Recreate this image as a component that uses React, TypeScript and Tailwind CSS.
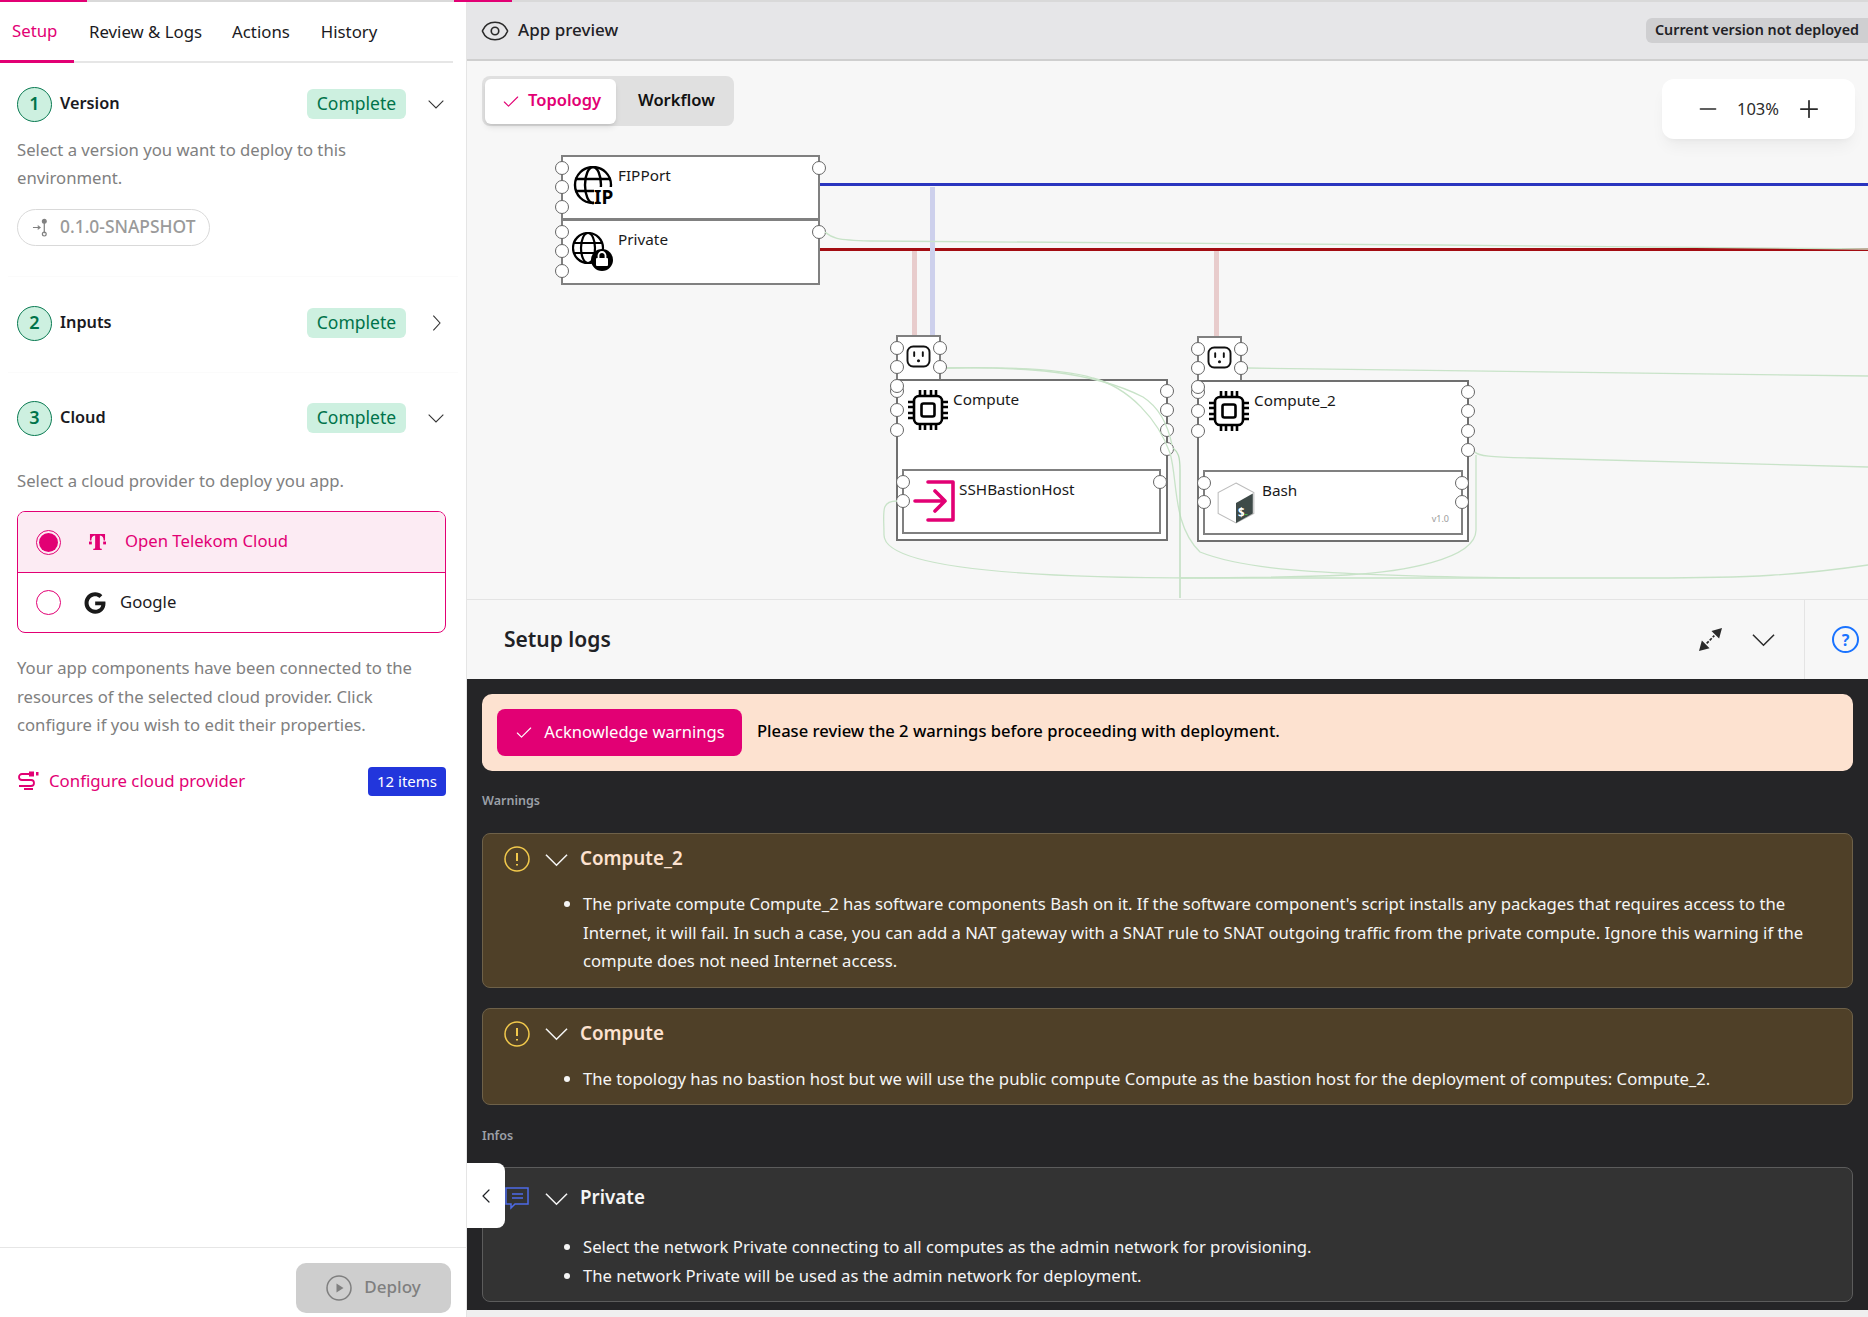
import React from 'react';
import { FaGoogle } from 'react-icons/fa';
import { Check, Eye, Minus, Plus, ChevronLeft } from 'lucide-react';

const Chevron: React.FC<{ right?: boolean; className?: string }> = ({ right, className }) => (
  <svg viewBox="0 0 24 24" className={className} fill="none" stroke="currentColor" strokeWidth="1.6">
    {right ? <path d="M8 1 L18 12 L8 23" /> : <path d="M1 7 L12 18 L23 7" />}
  </svg>
);

const Port: React.FC = () => <div className="w-[14px] h-[14px] rounded-full border-[1.5px] border-[#666] bg-white" />;

const PortColumn: React.FC<{ count: number; className: string }> = ({ count, className }) => (
  <div className={`absolute flex flex-col gap-[5.4px] ${className}`}>
    {Array.from({ length: count }).map((_, i) => (
      <Port key={i} />
    ))}
  </div>
);

const ChipIcon: React.FC<{ className: string }> = ({ className }) => (
  <svg viewBox="0 0 42 42" className={className} fill="none" stroke="#000" strokeWidth="2.6">
    <rect x="7" y="7" width="28" height="28" rx="5" />
    <rect x="14.5" y="14.5" width="13" height="13" rx="2" />
    <path d="M13 1v6M18 1v6M24 1v6M29 1v6M13 35v6M18 35v6M24 35v6M29 35v6M1 13h6M1 18h6M1 24h6M1 29h6M35 13h6M35 18h6M35 24h6M35 29h6" />
  </svg>
);

const SocketIcon: React.FC<{ className: string }> = ({ className }) => (
  <svg viewBox="0 0 26 24" className={className} fill="none" stroke="#111" strokeWidth="2">
    <rect x="1.5" y="1.5" width="23" height="21" rx="6" />
    <path d="M8.5 7.5v4M17.5 7.5v4" strokeLinecap="round" />
    <circle cx="13" cy="16.5" r="1.6" fill="#111" stroke="none" />
  </svg>
);

const ComputeNode: React.FC<{ name: string; className: string; children: React.ReactNode }> = ({ name, className, children }) => (
  <div className={`absolute w-[272px] h-[162px] border-2 border-[#707070] bg-white ${className}`}>
    <PortColumn count={3} className="left-[-8px] top-[3px]" />
    <div className="absolute left-[-8px] top-[-2px]"><Port /></div>
    <PortColumn count={4} className="right-[-8px] top-[3px]" />
    <ChipIcon className="absolute left-[9px] top-[8px] w-[42px] h-[42px]" />
    <div className="absolute left-[55px] top-[8px] text-[15.3px] leading-[20px] text-[#1a1a1a]">{name}</div>
    {children}
  </div>
);

const SocketNode: React.FC<{ className: string }> = ({ className }) => (
  <div className={`absolute w-[45px] h-[46px] border-2 border-[#808080] bg-white ${className}`}>
    <PortColumn count={2} className="left-[-8px] top-[4px]" />
    <PortColumn count={2} className="right-[-8px] top-[4px]" />
    <SocketIcon className="absolute left-[8px] top-[8px] w-[25px] h-[23px]" />
  </div>
);

const Wires: React.FC = () => (
  <svg className="absolute inset-0 w-full h-full pointer-events-none" fill="none" stroke="#c8e3c8" strokeWidth="1.3">
    <g transform="translate(-467 -61)">
      <path d="M825 232 C832 238 835 240 870 241 L1440 245 L1868 249" />
      <path d="M947 368 C1000 367 1060 368 1093 378 C1130 388 1158 420 1170 453 C1178 480 1172 525 1200 552 C1240 568 1300 575 1520 578" />
      <path d="M947 368 C1020 367 1090 370 1143 397 C1160 408 1168 425 1172 445" />
      <path d="M1173 448 C1178 452 1180 456 1180 470 L1180 598" stroke="#b9dbb9" />
      <path d="M897 501 C880 501 884 512 884 535 C884 562 980 578 1200 578 L1650 578 C1750 578 1800 575 1868 565" />
      <path d="M1475 452 C1478 456 1490 457 1530 458 L1868 467" />
      <path d="M1476 455 L1476 530 C1476 560 1400 572 1347 575 C1300 577 1250 578 1180 578" />
      <path d="M1248 368 C1300 368 1440 370 1868 376" />
    </g>
  </svg>
);

const Canvas: React.FC = () => (
  <div className="relative h-[538px] bg-[#f7f7f7] overflow-hidden">
    {/* network links */}
    <div className="absolute left-[352px] top-[122px] right-0 h-[3px] bg-[#2a35bf]" />
    <div className="absolute left-[352px] top-[187px] right-0 h-[3px] bg-[#a30d12]" />
    <div className="absolute left-[463px] top-[126px] w-[5px] h-[150px] bg-[#cdd0ec]" />
    <div className="absolute left-[445px] top-[190px] w-[5px] h-[86px] bg-[#e8cccc]" />
    <div className="absolute left-[747px] top-[190px] w-[5px] h-[86px] bg-[#e8cccc]" />

    <div className="absolute left-[15px] top-[15px] w-[252px] h-[50px] rounded-lg bg-[#e0e0e0] flex z-10">
      <div className="ml-[3px] mt-[3px] w-[131px] h-[45px] rounded-md bg-white shadow-md flex items-center pl-[16px] gap-[7px] text-[#e20074] text-[16.5px] font-semibold">
        <Check className="w-[20px] h-[20px]" strokeWidth={1.3} />
        <span className="mb-[2px]">Topology</span>
      </div>
      <div className="flex-1 flex items-center pl-[22px] pb-[2px] text-[16.5px] font-semibold text-[#111]">Workflow</div>
    </div>
    <div className="absolute left-[1195px] top-[18px] w-[193px] h-[60px] rounded-xl bg-white shadow-lg shadow-black/5 flex items-center justify-between pl-[33px] pr-[32px] text-[#2b2b2b] z-10">
      <Minus className="w-[26px] h-[26px]" strokeWidth={1.5} />
      <span className="text-[16.5px]">103%</span>
      <Plus className="w-[28px] h-[28px]" strokeWidth={1.5} />
    </div>

    {/* FIPPort */}
    <div className="absolute left-[94px] top-[94px] w-[259px] h-[65px] border-2 border-[#808080] bg-white">
      <PortColumn count={3} className="left-[-8px] top-[4px]" />
      <div className="absolute right-[-8px] top-[4px]"><Port /></div>
      <svg viewBox="0 0 40 40" className="absolute left-[10px] top-[9px] w-[40px] h-[40px]" fill="none" stroke="#000" strokeWidth="2.4">
        <circle cx="20" cy="19" r="18" />
        <ellipse cx="20" cy="19" rx="8" ry="18" />
        <path d="M2 13h36M2 25h36" />
        <rect x="21" y="21" width="19" height="19" fill="#fff" stroke="none" />
      </svg>
      <span className="absolute left-[31px] top-[30px] text-[19px] leading-[20px] font-bold text-black">IP</span>
      <div className="absolute left-[55px] top-[8px] text-[15.3px] leading-[20px] text-[#1a1a1a]">FIPPort</div>
    </div>
    {/* Private */}
    <div className="absolute left-[94px] top-[158px] w-[259px] h-[66px] border-2 border-[#808080] bg-white">
      <PortColumn count={3} className="left-[-8px] top-[4px]" />
      <div className="absolute right-[-8px] top-[4px]"><Port /></div>
      <svg viewBox="0 0 42 40" className="absolute left-[9px] top-[11px] w-[42px] h-[40px]" fill="none" stroke="#000" strokeWidth="2.2">
        <circle cx="16" cy="16" r="15" />
        <ellipse cx="16" cy="16" rx="7" ry="15" />
        <path d="M1 11h30M1 21h30" />
        <circle cx="30" cy="28" r="11" fill="#000" stroke="none" />
        <rect x="24" y="26" width="12" height="8" rx="1" fill="#fff" stroke="none" />
        <path d="M26.5 26v-2.500a3.500 3.500 0 0 1 7 0v2.500" stroke="#fff" strokeWidth="1.8" />
      </svg>
      <div className="absolute left-[55px] top-[8px] text-[15.3px] leading-[20px] text-[#1a1a1a]">Private</div>
    </div>

    <SocketNode className="left-[429px] top-[274px]" />
    <ComputeNode name="Compute" className="left-[429px] top-[318px]">
      <div className="absolute left-[4px] top-[88px] w-[259px] h-[65px] border-2 border-[#808080] bg-white">
        <PortColumn count={2} className="left-[-8px] top-[4px]" />
        <div className="absolute right-[-8px] top-[4px]"><Port /></div>
        <svg viewBox="0 0 42 42" className="absolute left-[9px] top-[9px] w-[42px] h-[42px]" fill="none" stroke="#e20074" strokeWidth="3.6" strokeLinecap="round" strokeLinejoin="round">
          <path d="M15 2h25v38H15M2 21h30M22 11l10 10-10 10" />
        </svg>
        <div className="absolute left-[55px] top-[8px] text-[15.3px] leading-[20px] text-[#1a1a1a]">SSHBastionHost</div>
      </div>
    </ComputeNode>

    <SocketNode className="left-[730px] top-[275px]" />
    <ComputeNode name="Compute_2" className="left-[730px] top-[319px]">
      <div className="absolute left-[4px] top-[88px] w-[260px] h-[65px] border-2 border-[#808080] bg-white">
        <PortColumn count={2} className="left-[-8px] top-[4px]" />
        <PortColumn count={2} className="right-[-8px] top-[4px]" />
        <svg viewBox="0 0 36 40" className="absolute left-[12px] top-[10px] w-[38px] h-[42px]">
          <path d="M18 1 L35 10 V30 L18 39 L1 30 V10 Z" fill="#fff" stroke="#bcbcbc" strokeWidth="1" />
          <path d="M34 11 V30 L18 39 V20 Z" fill="#3e4a48" />
          <text x="20" y="33" fontSize="11" fontWeight="700" fill="#fff">$</text>
          <path d="M26 31h3" stroke="#4cae4c" strokeWidth="1" />
        </svg>
        <div className="absolute left-[57px] top-[8px] text-[15.3px] leading-[20px] text-[#1a1a1a]">Bash</div>
        <span className="absolute right-[12px] bottom-[8px] text-[9px] text-[#9a9a9a]">v1.0</span>
      </div>
    </ComputeNode>

    <Wires />
  </div>
);

const Step: React.FC<{ n: number; title: string; open?: boolean }> = ({ n, title, open }) => (
  <div className="flex items-center h-[36px] pl-[17px] pr-[22px]">
    <div className="w-[35px] h-[35px] rounded-full border border-[#0a7a52] bg-[#cdf0e0] flex items-center justify-center text-[#00734a] text-[18px] font-semibold pb-[2px]">{n}</div>
    <div className="ml-[8px] mb-[2px] text-[16.3px] font-semibold text-[#1a1a22]">{title}</div>
    <div className="ml-auto w-[99px] h-[30px] rounded-md bg-[#cdf0e0] text-[#00734a] text-[17.5px] flex items-center justify-center pb-[2px]">Complete</div>
    <div className="w-[38px] flex justify-end text-[#333]">
      {open ? <Chevron className="w-[16px] h-[16px]" /> : <Chevron right className="w-[16px] h-[16px]" />}
    </div>
  </div>
);

const LeftPanel: React.FC = () => (
  <div className="w-[467px] flex-none border-r border-[#e5e5e5] bg-white flex flex-col">
    <div className="h-[61px] flex-none flex border-b-2 border-[#e6e6e6] mr-[13px] text-[16.8px]">
      <div className="w-[74px] mb-[-2px] border-b-[3px] border-[#e20074] text-[#e20074] flex items-center pl-[12px]">Setup</div>
      <div className="ml-[15px] text-[#1a1a22] flex items-center">Review &amp; Logs</div>
      <div className="ml-[30px] text-[#1a1a22] flex items-center">Actions</div>
      <div className="ml-[31px] text-[#1a1a22] flex items-center">History</div>
    </div>
    <div className="flex-1 pt-[23px]">
      <Step n={1} title="Version" open />
      <p className="ml-[17px] mr-[90px] mt-[14px] text-[16.7px] leading-[28px] text-[#808080]">Select a version you want to deploy to this environment.</p>
      <div className="ml-[17px] mt-[17px] w-[193px] h-[37px] rounded-full border border-[#d9d9d9] flex items-center pl-[14px] gap-[11px] text-[#9a9a9a] text-[17.4px] font-medium">
        <svg viewBox="0 0 18 20" className="w-[17px] h-[19px]" fill="none" stroke="#808080" strokeWidth="1.3">
          <path d="M1 10h7M6 8l2.500 2L6 12M13 4v12" />
          <circle cx="13" cy="3.500" r="2" fill="#808080" />
          <circle cx="13" cy="17" r="2" />
        </svg>
        <span className="mb-[2px]">0.1.0-SNAPSHOT</span>
      </div>
      <div className="mt-[30px] h-px mx-[8px] bg-[#fbfbfb]" />
      <div className="mt-[28px]"><Step n={2} title="Inputs" /></div>
      <div className="mt-[31px] h-px mx-[8px] bg-[#fbfbfb]" />
      <div className="mt-[27px]"><Step n={3} title="Cloud" open /></div>
      <p className="ml-[17px] mt-[31px] text-[16.7px] leading-[28px] text-[#808080]">Select a cloud provider to deploy you app.</p>
      <div className="ml-[17px] mt-[16px] w-[429px] rounded-lg border border-[#e20074] overflow-hidden">
        <div className="h-[61px] bg-[#fcebf3] border-b border-[#e20074] flex items-center pl-[18px]">
          <div className="w-[25px] h-[25px] rounded-full border border-[#e20074] flex items-center justify-center">
            <div className="w-[19px] h-[19px] rounded-full bg-[#e20074]" />
          </div>
          <svg viewBox="0 0 18 20" className="ml-[28px] w-[17px] h-[19px]" fill="#e20074">
            <path d="M1 1h16v7h-1.500c0-3-1-5-4-5.300V15c0 1.300.5 1.700 2 1.700V18H4.500v-1.300c1.500 0 2-.4 2-1.700V2.700c-3 .3-4 2.300-4 5.300H1z" />
            <rect x="0" y="9" width="3" height="3" />
            <rect x="15" y="9" width="3" height="3" />
          </svg>
          <span className="ml-[19px] mb-[2px] text-[16.7px] text-[#e20074]">Open Telekom Cloud</span>
        </div>
        <div className="h-[59px] flex items-center pl-[18px]">
          <div className="w-[25px] h-[25px] rounded-full border border-[#e20074]" />
          <FaGoogle className="ml-[23px] w-[22px] h-[22px] text-[#1a1a1a]" />
          <span className="ml-[14px] mb-[2px] text-[16.7px] text-[#1a1a22]">Google</span>
        </div>
      </div>
      <p className="ml-[17px] mr-[24px] mt-[21px] text-[16.7px] leading-[28.500px] text-[#808080]">Your app components have been connected to the resources of the selected cloud provider. Click configure if you wish to edit their properties.</p>
      <div className="ml-[17px] mr-[20px] mt-[26px] flex items-center h-[30px]">
        <svg viewBox="0 0 22 20" className="w-[22px] h-[20px]" fill="none" stroke="#e20074" strokeWidth="1.8">
          <path d="M14 3H5a3 3 0 0 0 0 6h9a3 3 0 0 1 0 6H2M7 18h9" />
          <rect x="12" y="0.500" width="5" height="5" fill="#e20074" stroke="none" />
          <rect x="19" y="1" width="2.500" height="3.500" fill="#e20074" stroke="none" />
        </svg>
        <span className="ml-[10px] text-[16.8px] text-[#e20074]">Configure cloud provider</span>
        <div className="ml-auto mt-[2px] w-[78px] h-[29px] rounded bg-[#2236dc] text-white text-[15px] flex items-center justify-center">12 items</div>
      </div>
    </div>
    <div className="h-[70px] flex-none border-t border-[#e6e6e6] relative flex justify-end items-start pt-[15px] pr-[15px]">
      <div className="w-[155px] h-[50px] rounded-[10px] bg-[#cecece] text-[#7f7f7f] text-[17px] font-medium flex items-center justify-center gap-[12px]">
        <svg viewBox="0 0 26 26" className="w-[26px] h-[26px]" fill="none" stroke="#7f7f7f" strokeWidth="1.500">
          <circle cx="13" cy="13" r="12" />
          <path d="M10.500 8.500l7 4.500-7 4.500z" fill="#7f7f7f" stroke="none" />
        </svg>
        <span className="mb-[2px]">Deploy</span>
      </div>
    </div>
  </div>
);

const WarnIcon: React.FC = () => (
  <svg viewBox="0 0 26 26" className="w-[26px] h-[26px] flex-none" fill="none" stroke="#f2c94c" strokeWidth="1.500">
    <circle cx="13" cy="13" r="12" />
    <path d="M13 7v8M13 18v1.500" strokeWidth="2" />
  </svg>
);

const LogCard: React.FC<{ title: string; items: string[]; info?: boolean }> = ({ title, items, info }) => (
  <div className={info ? 'rounded-lg border border-[#5c5c5c] bg-[#333333] pb-[11px]' : 'rounded-lg border border-[#6e6149] bg-[#4f4028] pb-[11px]'}>
    <div className={info ? 'h-[60px] flex items-center pl-[21px]' : 'h-[50px] flex items-center pl-[21px]'}>
      {info ? (
        <svg viewBox="0 0 26 24" className="w-[26px] h-[24px] flex-none" fill="none" stroke="#4d6be8" strokeWidth="1.500">
          <path d="M2 2h22v16H11l-4 4v-4H2z" />
          <path d="M8 8h11M8 12h11" />
        </svg>
      ) : (
        <WarnIcon />
      )}
      <Chevron className="ml-[15px] w-[23px] h-[23px] text-[#f5f5f5]" />
      <span className={info ? 'ml-[12px] mb-[1px] text-[18.8px] font-semibold text-[#f5f5f5]' : 'ml-[12px] mb-[1px] text-[18.8px] font-semibold text-[#fde2d0]'}>{title}</span>
    </div>
    <ul className={info ? 'mt-[5px] list-disc pl-[100px] pr-[40px] text-[16.7px] leading-[28.500px] text-[#f5f5f5]' : 'mt-[6px] list-disc pl-[100px] pr-[40px] text-[16.7px] leading-[28.500px] text-[#f5f5f5]'}>
      {items.map(t => (
        <li key={t}>{t}</li>
      ))}
    </ul>
  </div>
);

const Logs: React.FC = () => (
  <div className="flex-1 bg-[#252527] px-[15px] pt-[15px]">
    <div className="h-[77px] rounded-[10px] bg-[#fde2d0] flex items-center pl-[15px]">
      <div className="w-[245px] h-[47px] rounded-lg bg-[#e20074] text-white text-[16.6px] flex items-center justify-center gap-[10px]">
        <Check className="w-[20px] h-[20px]" strokeWidth={1.3} />
        Acknowledge warnings
      </div>
      <span className="ml-[15px] mb-[2px] text-[16.6px] font-medium text-black">Please review the 2 warnings before proceeding with deployment.</span>
    </div>
    <div className="mt-[22px] mb-[24px] text-[12.5px] leading-[16px] font-semibold text-[#9ca0a8]">Warnings</div>
    <LogCard
      title="Compute_2"
      items={["The private compute Compute_2 has software components Bash on it. If the software component's script installs any packages that requires access to the Internet, it will fail. In such a case, you can add a NAT gateway with a SNAT rule to SNAT outgoing traffic from the private compute. Ignore this warning if the compute does not need Internet access."]}
    />
    <div className="h-[20px]" />
    <LogCard
      title="Compute"
      items={['The topology has no bastion host but we will use the public compute Compute as the bastion host for the deployment of computes: Compute_2.']}
    />
    <div className="mt-[23px] mb-[23px] text-[12.5px] leading-[16px] font-semibold text-[#9ca0a8]">Infos</div>
    <LogCard
      info
      title="Private"
      items={['Select the network Private connecting to all computes as the admin network for provisioning.', 'The network Private will be used as the admin network for deployment.']}
    />
  </div>
);

const RightPanel: React.FC = () => (
  <div className="flex-1 min-w-0 relative flex flex-col">
    <div className="h-[59px] flex-none bg-[#e6e6e8] border-b-2 border-[#cfcfcf] flex items-center pl-[13px]">
      <Eye className="w-[30px] h-[30px] text-[#2b2b2b]" strokeWidth={1.3} />
      <span className="ml-[8px] mb-[2px] text-[17px] font-medium text-[#1f2226]">App preview</span>
      <div className="ml-auto h-[25px] w-[222px] rounded-l-md bg-[#cfcfd1] flex items-center pl-[9px] pb-[1px] text-[14.3px] font-semibold text-[#1f2226]">Current version not deployed</div>
    </div>
    <Canvas />
    <div className="h-[80px] flex-none bg-[#f7f7f7] border-t border-[#e4e4e4] flex items-center pl-[37px]">
      <span className="text-[21px] font-semibold text-[#1f2226]">Setup logs</span>
      <svg viewBox="0 0 24 24" className="ml-auto w-[23px] h-[23px]" fill="#2b2b2b" stroke="#2b2b2b" strokeWidth="1.800">
        <path d="M8 16l8-8" strokeDasharray="3 1.500" />
        <path d="M24 0l-11 3 8 8zM0 24l11-3-8-8z" stroke="none" />
      </svg>
      <Chevron className="ml-[30px] w-[23px] h-[23px] text-[#2b2b2b]" />
      <div className="ml-[29px] w-[64px] h-full border-l border-[#e4e4e4] flex items-center justify-end pr-[9px]">
        <div className="w-[27px] h-[27px] rounded-full border-2 border-[#1a73ff] text-[#1a73ff] text-[16px] font-bold flex items-center justify-center">?</div>
      </div>
    </div>
    <Logs />
    <div className="h-[7px] flex-none bg-[#efefef]" />
    <div className="absolute left-0 top-[1161px] w-[38px] h-[65px] rounded-r-lg bg-white flex items-center justify-center text-[#1f2226]">
      <ChevronLeft className="w-[24px] h-[24px]" strokeWidth={1.2} />
    </div>
  </div>
);

export default function App() {
  return (
    <div className="w-[1868px] h-[1317px] overflow-hidden flex flex-col bg-white font-['Noto_Sans',sans-serif]">
      <div className="h-[2px] flex-none flex bg-[#d9d9d9]">
        <div className="w-[87px] bg-[#e20074]" />
        <div className="ml-[367px] w-[58px] bg-[#e20074]" />
      </div>
      <div className="flex-1 min-h-0 flex">
        <LeftPanel />
        <RightPanel />
      </div>
    </div>
  );
}
